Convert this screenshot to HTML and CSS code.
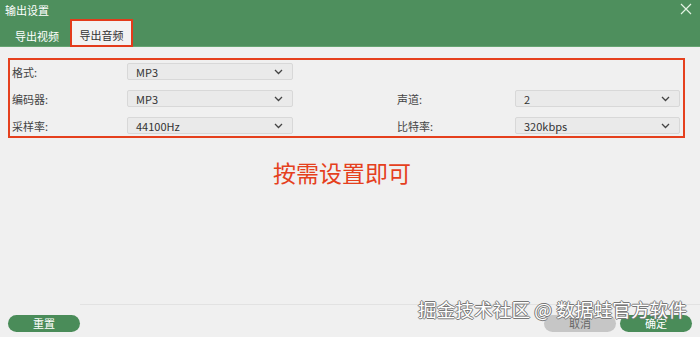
FILE: index.html
```html
<!DOCTYPE html>
<html lang="zh-CN">
<head>
  <meta charset="UTF-8">
  <title>输出设置</title>
  <link rel="stylesheet" href="styles.css">
</head>
<body>
  <div class="dialog">
    <div class="header">
      <div class="title-row">
        <span class="title">输出设置</span>
        <svg class="close" width="12" height="12" viewBox="0 0 12 12">
          <path d="M1 1L11 11M11 1L1 11" stroke="#e3f3e3" stroke-width="1.2" fill="none"/>
        </svg>
      </div>
      <div class="tabs">
        <div class="tab">导出视频</div>
        <div class="tab active">导出音频</div>
      </div>
    </div>

    <div class="main">
      <div class="form-box">
        <div class="form-grid">
          <span class="label">格式:</span>
          <div class="select"><span>MP3</span><svg width="9" height="6" viewBox="0 0 9 6"><path d="M1 1L4.5 4.5L8 1" stroke="#444" stroke-width="1.3" fill="none"/></svg></div>
          <span></span><span></span><span></span>

          <span class="label">编码器:</span>
          <div class="select"><span>MP3</span><svg width="9" height="6" viewBox="0 0 9 6"><path d="M1 1L4.5 4.5L8 1" stroke="#444" stroke-width="1.3" fill="none"/></svg></div>
          <span></span>
          <span class="label">声道:</span>
          <div class="select"><span>2</span><svg width="9" height="6" viewBox="0 0 9 6"><path d="M1 1L4.5 4.5L8 1" stroke="#444" stroke-width="1.3" fill="none"/></svg></div>

          <span class="label">采样率:</span>
          <div class="select"><span>44100Hz</span><svg width="9" height="6" viewBox="0 0 9 6"><path d="M1 1L4.5 4.5L8 1" stroke="#444" stroke-width="1.3" fill="none"/></svg></div>
          <span></span>
          <span class="label">比特率:</span>
          <div class="select"><span>320kbps</span><svg width="9" height="6" viewBox="0 0 9 6"><path d="M1 1L4.5 4.5L8 1" stroke="#444" stroke-width="1.3" fill="none"/></svg></div>
        </div>
      </div>
      <div class="hint">按需设置即可</div>
    </div>

    <div class="divider"></div>
    <div class="footer">
      <button class="btn green">重置</button>
      <div class="footer-right">
        <button class="btn gray">取消</button>
        <button class="btn green">确定</button>
      </div>
    </div>
    <div class="watermark">掘金技术社区 @ 数据蛙官方软件</div>
  </div>
</body>
</html>
```

FILE: styles.css
```css
* {
  box-sizing: border-box;
}
body {
  margin: 0;
  font-family: "Noto Sans CJK SC", "Noto Sans", sans-serif;
  background-color: #f0f0f0;
}
.dialog {
  position: relative;
  width: 700px;
  height: 337px;
  display: flex;
  flex-direction: column;
  background-color: #f0f0f0;
}
.header {
  height: 47px;
  background-color: #4e8f5d;
  border-bottom: 1px solid #66a472;
}
.title-row {
  height: 20px;
  display: flex;
  justify-content: space-between;
  align-items: flex-start;
  padding: 3px 8px 0 5px;
}
.title {
  color: #fff;
  font-size: 11px;
  line-height: 14px;
}
.tabs {
  height: 26px;
  display: flex;
  align-items: stretch;
  gap: 11px;
  padding-left: 15px;
}
.tab {
  color: #fff;
  font-size: 11px;
  display: flex;
  align-items: center;
  padding-top: 6px;
}
.tab.active {
  width: 63px;
  justify-content: center;
  color: #333;
  background-color: #f2f2f2;
  border: 2px solid #e33b1b;
  padding-top: 3px;
  margin-top: -1px;
  margin-bottom: -1px;
}
.main {
  flex: 1;
}
.form-box {
  margin: 11px 15px 0 8px;
  border: 2px solid #e5401d;
  padding: 3px 0 2px 2px;
}
.form-grid {
  display: grid;
  grid-template-columns: 115px 166px 104px 118px 165px;
  grid-auto-rows: 17px;
  row-gap: 10px;
  align-items: center;
}
.label {
  font-size: 11px;
  color: #444;
}
.select {
  height: 17px;
  display: flex;
  justify-content: space-between;
  align-items: center;
  padding: 0 9px 0 8px;
  background-color: #eaeaea;
  border: 1px solid #d8d8d8;
  border-radius: 2px;
  font-size: 11px;
  color: #333;
}
.hint {
  margin-top: 20px;
  padding-right: 16px;
  text-align: center;
  font-size: 23px;
  line-height: 28px;
  color: #e5401d;
}
.divider {
  height: 1px;
  margin-left: 80px;
  background-color: #e2e2e2;
}
.footer {
  height: 32px;
  display: flex;
  justify-content: space-between;
  padding: 10px 8px 0 8px;
}
.footer-right {
  display: flex;
  gap: 4px;
}
.btn {
  width: 72px;
  height: 17px;
  border: none;
  border-radius: 9px;
  font-family: inherit;
  font-size: 11px;
  line-height: 17px;
  padding: 0;
}
.btn.green {
  background-color: #4a8c59;
  color: #fff;
}
.btn.gray {
  background-color: #c6c6c6;
  color: #666;
}
.watermark {
  position: absolute;
  right: 13px;
  top: 296px;
  font-size: 18.7px;
  line-height: 26px;
  color: #fff;
  text-shadow: -1px 0 #777, 1px 0 #777, 0 -1px #777, 0 1px #777;
}
```
